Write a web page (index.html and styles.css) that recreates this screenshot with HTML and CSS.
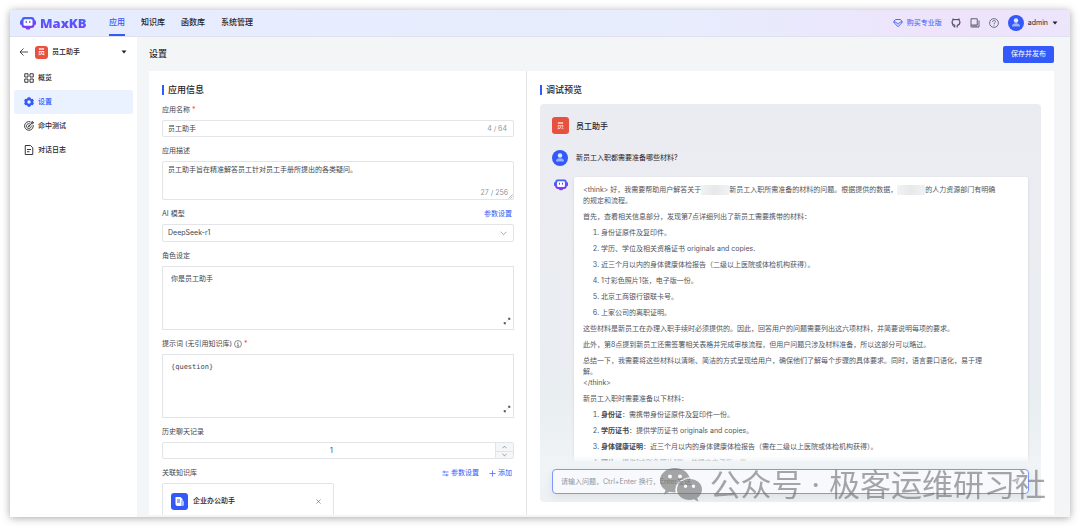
FILE: index.html
```
<!DOCTYPE html>
<html lang="zh-CN">
<head>
    <meta charset="UTF-8">
    <meta name="viewport" content="width=device-width, initial-scale=1.0">
    <title>MaxKB</title>
    <link rel="stylesheet" href="styles.css">
</head>
<body>
    <!-- Shared icons -->
    <svg class="sprite" aria-hidden="true">
        <defs>
            <linearGradient id="brand" x1="0" y1="0" x2="0.3" y2="1">
                <stop offset="0" stop-color="#3370ff"/>
                <stop offset="1" stop-color="#7f3bf5"/>
            </linearGradient>
        </defs>
        <symbol id="icon-bot" viewBox="0 0 32 26">
            <rect x="0" y="6" width="32" height="10" rx="3" fill="url(#brand)"/>
            <rect x="3" y="0" width="26" height="22" rx="6" fill="url(#brand)"/>
            <path d="M10 21h12l-3 4h-6z" fill="#7f3bf5"/>
            <rect x="7" y="4.500" width="18" height="13" rx="3" fill="#fff"/>
            <path d="M12.500 8.500v2.500M19.500 8.500v2.500" stroke="#5b4dfa" stroke-width="2.400" stroke-linecap="round"/>
        </symbol>
        <symbol id="icon-user" viewBox="0 0 32 32">
            <circle cx="16" cy="16" r="16" fill="#3459fb"/>
            <circle cx="16" cy="11" r="4.500" fill="#dfe6ff"/>
            <path d="M8 23c0-5 3-6.500 8-6.500s8 1.500 8 6.500z" fill="#9db2ff"/>
        </symbol>
        <symbol id="icon-expand" viewBox="0 0 16 16">
            <path d="M10 2h4v4zM2 10v4h4z" fill="#50555e" stroke="#50555e"/>
            <path d="M9.500 6.500l3-3M6.500 9.500l-3 3" stroke="#50555e" stroke-width="1.300"/>
        </symbol>
        <symbol id="icon-caret" viewBox="0 0 12 8">
            <path d="M1 1h10L6 7z" fill="#1f2329"/>
        </symbol>
    </svg>

    <div class="app">
        <header class="header">
            <a class="logo" href="#">
                <svg class="logo-icon" viewBox="0 0 32 26"><use href="#icon-bot"/></svg>
                <span class="logo-text">MaxKB</span>
            </a>
            <nav class="nav">
                <a class="active" href="#">应用</a>
                <a href="#">知识库</a>
                <a href="#">函数库</a>
                <a href="#">系统管理</a>
            </nav>
            <div class="header-right">
                <a class="buy" href="#">
                    <svg class="icon" viewBox="0 0 20 20" fill="none" stroke="#3459fb" stroke-width="1.800" stroke-linejoin="round"><path d="M5 3h10l4 5-9 9.500L1 8zM5.500 8l4.500 4.500L14.500 8M2 8h3.500M14.500 8H18"/></svg>
                    购买专业版
                </a>
                <a href="#" aria-label="GitHub"><svg class="icon" viewBox="0 0 20 20" fill="none" stroke="#50555e" stroke-width="2.400" stroke-linejoin="round"><path d="M7.500 19v-4.500C4 13.800 2.200 12 2.200 8.500c0-1.600.5-2.800 1.400-3.700L3.800 2l3 1.400c2.100-.5 4.300-.5 6.400 0l3-1.400.2 2.800c.9.900 1.400 2.100 1.400 3.700 0 3.500-1.800 5.300-5.300 6V19"/><path d="M7 16.800c-2.500.5-3-.8-4.500-2.300" stroke-width="1.600"/></svg></a>
                <a href="#" aria-label="文档"><svg class="icon" viewBox="0 0 20 20" fill="none" stroke="#50555e" stroke-width="1.800"><path d="M2 1.500h12.500V14H2zM2 14v4h16V5M5 16h10"/></svg></a>
                <a href="#" aria-label="帮助"><svg class="icon" viewBox="0 0 20 20" fill="none" stroke="#50555e" stroke-width="1.600"><circle cx="10" cy="10" r="8.800"/><path d="M7 8c0-4 6-4 6-.5 0 2-3 2-3 4.500M10 13.500v2"/></svg></a>
                <button class="account" type="button">
                    <svg class="avatar" viewBox="0 0 32 32"><use href="#icon-user"/></svg>
                    <span>admin</span>
                    <svg class="caret" viewBox="0 0 12 8"><use href="#icon-caret"/></svg>
                </button>
            </div>
        </header>

        <div class="body">
            <aside class="sidebar">
                <div class="app-switch">
                    <a class="back" href="#" aria-label="返回"><svg class="icon" viewBox="0 0 20 20" fill="none" stroke="#1f2329" stroke-width="1.600"><path d="M18 10H2M9 3l-7 7 7 7"/></svg></a>
                    <span class="app-badge small">员</span>
                    <span class="app-name">员工助手</span>
                    <svg class="caret" viewBox="0 0 12 8"><use href="#icon-caret"/></svg>
                </div>
                <nav class="menu">
                    <a href="#">
                        <svg class="icon" viewBox="0 0 20 20" fill="none" stroke="#1f2329" stroke-width="1.800"><path d="M1.500 1.500h6.500v6.500H1.500zM12 1.500h6.500v6.500H12zM1.500 12h6.500v6.500H1.500zM12 12h6.500v6.500H12z"/></svg>
                        概览
                    </a>
                    <a class="active" href="#">
                        <svg class="icon" viewBox="0 0 20 20"><path fill="#3459fb" fill-rule="evenodd" d="M7.500.5h5l1 2.500 1.500.8 2.500-.4 2.300 4.200L18 10l1.800 2.400-2.300 4.200-2.500-.4-1.500.8-1 2.500h-5l-1-2.500-1.500-.8-2.500.4L.2 12.400 2 10 .2 7.600l2.300-4.200 2.500.4L6.500 3zM10 6.500a3.500 3.500 0 1 0 0 7 3.500 3.500 0 0 0 0-7z"/></svg>
                        设置
                    </a>
                    <a href="#">
                        <svg class="icon" viewBox="0 0 20 20" fill="none" stroke="#1f2329" stroke-width="1.700"><path d="M13 1.800A8.700 8.700 0 1 0 18.300 8M11.500 5.700A4.800 4.800 0 1 0 14.300 9M9.500 10.500l5-5V2.500L17 .8v2.400h2.500L17.500 5.500h-3"/><circle cx="9.500" cy="10.500" r="1"/></svg>
                        命中测试
                    </a>
                    <a href="#">
                        <svg class="icon" viewBox="0 0 20 20" fill="none" stroke="#1f2329" stroke-width="1.800"><path d="M2.500 1h10.500l4.500 4.500V19h-15zM6 9h8M6 13.500h5"/></svg>
                        对话日志
                    </a>
                </nav>
            </aside>

            <main class="main">
                <div class="page-head">
                    <h1>设置</h1>
                    <button class="publish" type="button">保存并发布</button>
                </div>

                <div class="panel">
                    <form class="settings">
                        <h2 class="section-title">应用信息</h2>

                        <div class="label-row first">
                            <label for="name">应用名称 <span class="required">*</span></label>
                        </div>
                        <div class="field">
                            <input type="text" id="name" value="员工助手">
                            <span class="count">4 / 64</span>
                        </div>

                        <div class="label-row">
                            <label for="desc">应用描述</label>
                        </div>
                        <div class="area desc">
                            <textarea id="desc">员工助手旨在精准解答员工针对员工手册所提出的各类疑问。</textarea>
                            <span class="count">27 / 256</span>
                            <svg class="grip" viewBox="0 0 10 10" stroke="#646a73"><path d="M1 9l8-8M5 9l4-4"/></svg>
                        </div>

                        <div class="label-row">
                            <label for="model">AI 模型</label>
                            <a class="link" href="#">参数设置</a>
                        </div>
                        <div class="field select">
                            <select id="model">
                                <option>DeepSeek-r1</option>
                            </select>
                            <svg class="chevron" viewBox="0 0 12 8" fill="none" stroke="#8f959e" stroke-width="1.400"><path d="M1 1l5 5 5-5"/></svg>
                        </div>

                        <div class="label-row">
                            <label for="role">角色设定</label>
                        </div>
                        <div class="area editor">
                            <textarea id="role">你是员工助手</textarea>
                            <svg class="expand" viewBox="0 0 16 16"><use href="#icon-expand"/></svg>
                        </div>

                        <div class="label-row">
                            <label for="prompt">提示词 (无引用知识库)
                                <svg class="info" viewBox="0 0 16 16" fill="none" stroke="#40454d" stroke-width="1.200"><circle cx="8" cy="8" r="7"/><path d="M8 3.500v2M6.500 7H8v5M6 12h4"/></svg>
                                <span class="required">*</span></label>
                        </div>
                        <div class="area editor">
                            <textarea id="prompt">{question}</textarea>
                            <svg class="expand" viewBox="0 0 16 16"><use href="#icon-expand"/></svg>
                        </div>

                        <div class="label-row">
                            <label for="history">历史聊天记录</label>
                        </div>
                        <div class="field number">
                            <input type="number" id="history" value="1">
                            <div class="steps">
                                <button type="button" aria-label="增加"><svg viewBox="0 0 12 8" fill="none" stroke="#646a73" stroke-width="1.500"><path d="M1 7l5-5 5 5"/></svg></button>
                                <button type="button" aria-label="减少"><svg viewBox="0 0 12 8" fill="none" stroke="#646a73" stroke-width="1.500"><path d="M1 1l5 5 5-5"/></svg></button>
                            </div>
                        </div>

                        <div class="label-row">
                            <span>关联知识库</span>
                            <div class="links">
                                <a class="link" href="#"><svg viewBox="0 0 16 16" fill="none" stroke="#3459fb" stroke-width="1.600"><path d="M1 4.500h14M5 1.500v6M1 11.500h14M11 8.500v6"/></svg>参数设置</a>
                                <a class="link" href="#"><svg viewBox="0 0 16 16" fill="none" stroke="#3459fb" stroke-width="1.600"><path d="M1 8h14M8 1v14"/></svg>添加</a>
                            </div>
                        </div>
                        <div class="knowledge">
                            <svg class="knowledge-icon" viewBox="0 0 34 34"><rect width="34" height="34" rx="6" fill="#3459fb"/><path d="M9 8h10l4 4v14H13a4 4 0 0 1-4-4z" fill="#fff"/><path d="M20 15h3a3 3 0 0 1 3 3v5a3 3 0 0 1-3 3h-3z" fill="#aebeff"/><path d="M12 14h6M12 18h6" stroke="#3459fb" stroke-width="2"/></svg>
                            <span>企业办公助手</span>
                            <button type="button" aria-label="移除"><svg viewBox="0 0 12 12" stroke="#50555e" stroke-width="1.400"><path d="M1 1l10 10M11 1L1 11"/></svg></button>
                        </div>
                    </form>

                    <section class="preview">
                        <h2 class="section-title">调试预览</h2>
                        <div class="chat">
                            <div class="chat-head">
                                <span class="app-badge">员</span>
                                <strong>员工助手</strong>
                            </div>
                            <div class="question">
                                <svg class="avatar" viewBox="0 0 32 32"><use href="#icon-user"/></svg>
                                <span>新员工入职都需要准备哪些材料?</span>
                            </div>
                            <div class="answer">
                                <svg class="bot" viewBox="0 0 32 26"><use href="#icon-bot"/></svg>
                                <div class="bubble">
                                    <p>&lt;think&gt; 好，我需要帮助用户解答关于<span class="mask"></span>新员工入职所需准备的材料的问题。根据提供的数据，<span class="mask"></span>的人力资源部门有明确<br>的规定和流程。</p>
                                    <p>首先，查看相关信息部分，发现第7点详细列出了新员工需要携带的材料：</p>
                                    <ol>
                                        <li>身份证原件及复印件。</li>
                                        <li>学历、学位及相关资格证书 originals and copies.</li>
                                        <li>近三个月以内的身体健康体检报告（二级以上医院或体检机构获得）。</li>
                                        <li>1寸彩色照片1张，电子版一份。</li>
                                        <li>北京工商银行银联卡号。</li>
                                        <li>上家公司的离职证明。</li>
                                    </ol>
                                    <p>这些材料是新员工在办理入职手续时必须提供的。因此，回答用户的问题需要列出这六项材料，并简要说明每项的要求。</p>
                                    <p>此外，第8点提到新员工还需签署相关表格并完成审核流程，但用户问题只涉及材料准备，所以这部分可以略过。</p>
                                    <p>总结一下，我需要将这些材料以清晰、简洁的方式呈现给用户，确保他们了解每个步骤的具体要求。同时，语言要口语化，易于理<br>解。<br>&lt;/think&gt;</p>
                                    <p>新员工入职时需要准备以下材料：</p>
                                    <ol>
                                        <li><b>身份证</b>：需携带身份证原件及复印件一份。</li>
                                        <li><b>学历证书</b>：提供学历证书 originals and copies。</li>
                                        <li><b>身体健康证明</b>：近三个月以内的身体健康体检报告（需在二级以上医院或体检机构获得）。</li>
                                        <li><b>照片</b>：提供1寸彩色照片1张，并提交电子版一份。</li>
                                    </ol>
                                </div>
                            </div>
                            <div class="composer">
                                <div class="composer-box">
                                    <input type="text" aria-label="问题" placeholder="请输入问题，Ctrl+Enter 换行，Enter发送">
                                    <button type="button" aria-label="发送"><svg viewBox="0 0 20 20" fill="#b4b8c0"><path d="M1 8L19 1l-5 17-4-6 4-6-6 5z"/></svg></button>
                                </div>
                            </div>
                        </div>
                    </section>
                </div>
            </main>
        </div>
    </div>

    <div class="watermark">
        <svg viewBox="0 0 42 34" fill="#6c6c6c">
            <path fill-rule="evenodd" d="M15 0C6.500 0 0 5.500 0 12.500c0 4 2 7.300 5.500 9.500L4 26.500l5.500-2.800c2 .6 4 .8 6 .8C14 16 21 9.500 29.500 9.500 28 4 22 0 15 0zM10 6.500a2 2 0 1 1 0 4 2 2 0 0 1 0-4zm10 0a2 2 0 1 1 0 4 2 2 0 0 1 0-4z"/>
            <path fill-rule="evenodd" d="M29.500 11C22.500 11 17 15.500 17 21.500S22.500 32 29.500 32c1.500 0 3-.2 4.500-.7l4.500 2.500-1.300-3.800c3-2 4.800-5 4.800-8.500C42 15.500 36.500 11 29.500 11zM25.500 16.500a1.700 1.700 0 1 1 0 3.400 1.700 1.700 0 0 1 0-3.400zm8 0a1.700 1.700 0 1 1 0 3.400 1.700 1.700 0 0 1 0-3.400z"/>
        </svg>
        <span>公众号 · 极客运维研习社</span>
    </div>
</body>
</html>
```
FILE: styles.css
```
/* Color Scheme */
:root {
    --primary: #3459fb;
    --text: #1f2329;
    --text-regular: #40454d;
    --text-muted: #8f959e;
    --border: #e2e4e8;
    --page: #f3f5f7;
    --danger: #e85140;
}

* {
    box-sizing: border-box;
}

body {
    margin: 0;
    padding: 10px 10px 11px;
    height: 100vh;
    overflow: hidden;
    background: #fff;
    color: var(--text);
    font-family: Inter, "Noto Sans CJK SC", sans-serif;
    font-size: 7px;
    line-height: 12px;
}

a {
    color: inherit;
    text-decoration: none;
}

button,
input,
textarea,
select {
    margin: 0;
    padding: 0;
    border: 0;
    background: none;
    color: inherit;
    font: inherit;
    outline: none;
}

button {
    cursor: pointer;
}

svg {
    display: block;
    flex: none;
}

h1,
h2 {
    margin: 0;
    font-size: 9px;
    font-weight: 500;
}

.sprite {
    position: absolute;
    width: 0;
    height: 0;
}

.icon {
    width: 10px;
    height: 10px;
}

.caret {
    width: 6px;
    height: 4px;
}

.avatar {
    width: 16px;
    height: 16px;
}

/* Layout */
.app {
    display: flex;
    flex-direction: column;
    height: 100%;
    background: var(--page);
    box-shadow: 0 1px 8px rgba(0, 0, 0, 0.35);
}

.body {
    display: flex;
    flex: 1;
    min-height: 0;
}

/* Header */
.header {
    display: flex;
    align-items: center;
    height: 27px;
    padding: 0 12px 0 10px;
    background: linear-gradient(90deg, #e6ecff 0%, #e8ecfd 65%, #eee3fb 90%, #ece6fb 100%);
    border-bottom: 1px solid #dfe1ee;
}

.logo {
    display: flex;
    align-items: center;
    gap: 4px;
    width: 89px;
}

.logo-icon {
    width: 16px;
    height: 13px;
}

.logo-text {
    font-family: "Noto Sans", sans-serif;
    font-size: 13px;
    font-weight: 900;
    line-height: 16px;
    color: transparent;
    background: linear-gradient(180deg, #3370ff 10%, #7f3bf5 90%);
    -webkit-background-clip: text;
    background-clip: text;
}

.nav {
    display: flex;
    align-self: stretch;
    gap: 16px;
    font-size: 8px;
    font-weight: 500;
}

.nav a {
    padding-top: 6px;
}

.nav .active {
    color: var(--primary);
    border-bottom: 2px solid var(--primary);
}

.header-right {
    display: flex;
    align-items: center;
    gap: 9px;
    margin-left: auto;
}

.buy,
.account {
    display: flex;
    align-items: center;
    gap: 4px;
}

.buy {
    color: var(--primary);
}

/* Sidebar */
.sidebar {
    width: 127px;
    flex: none;
    padding: 8px 4px;
    background: #fff;
}

.app-switch {
    display: flex;
    align-items: center;
    gap: 4px;
    height: 14px;
    margin-bottom: 7px;
    padding: 0 6px 0 5px;
    font-weight: 500;
}

.app-switch .caret {
    margin-left: auto;
}

.app-badge {
    display: flex;
    align-items: center;
    justify-content: center;
    width: 17px;
    height: 17px;
    border-radius: 3px;
    background: var(--danger);
    color: #fff;
}

.app-badge.small {
    width: 13px;
    height: 13px;
    margin-left: 2px;
}

.menu a {
    display: flex;
    align-items: center;
    gap: 4px;
    height: 24px;
    padding-left: 10px;
    border-radius: 2px;
    font-weight: 500;
}

.menu .active {
    background: #ebf2ff;
    color: var(--primary);
}

/* Page */
.main {
    display: flex;
    flex: 1;
    flex-direction: column;
    min-width: 0;
    padding: 0 16px 2px 12px;
}

.page-head {
    display: flex;
    align-items: center;
    justify-content: space-between;
    height: 34px;
}

.publish {
    height: 17px;
    padding: 0 8px;
    border-radius: 2px;
    background: var(--primary);
    color: #fff;
}

.panel {
    display: grid;
    grid-template-columns: 377px 1fr;
    flex: 1;
    min-height: 0;
    background: #fff;
}

.section-title {
    padding-left: 4px;
    border-left: 2px solid var(--primary);
    line-height: 10px;
}

/* Settings form */
.settings {
    min-height: 0;
    overflow: hidden;
    padding: 14px 12px 0 13px;
    color: var(--text-regular);
}

.settings .section-title,
.knowledge {
    color: var(--text);
}

.label-row {
    display: flex;
    justify-content: space-between;
    padding: 8px 0 4px;
}

.label-row.first {
    padding-top: 9px;
}

.label-row label {
    display: flex;
    gap: 2px;
}

.label-row .info {
    width: 8px;
    height: 8px;
    margin-top: 2px;
}

.required {
    color: #f54a45;
}

.link {
    display: flex;
    align-items: center;
    gap: 2px;
    padding-right: 2px;
    color: var(--primary);
}

.link svg {
    width: 7px;
    height: 7px;
}

.links {
    display: flex;
    gap: 8px;
}

.field {
    position: relative;
    display: flex;
    align-items: center;
    height: 17px;
    border: 1px solid var(--border);
    border-radius: 2px;
}

.field.select {
    height: 18px;
}

.field input,
.field select {
    flex: 1;
    min-width: 0;
    padding-left: 5px;
    appearance: none;
}

.count {
    padding-right: 6px;
    color: var(--text-muted);
}

.chevron {
    position: absolute;
    right: 6px;
    width: 7px;
    height: 5px;
    pointer-events: none;
}

.area {
    position: relative;
    height: 64px;
    border: 1px solid var(--border);
}

.area textarea {
    display: block;
    width: 100%;
    height: 100%;
    padding: 6px 8px;
    resize: none;
}

.area.desc {
    height: 39px;
    border-radius: 2px;
}

.area.desc textarea {
    padding: 2px 5px;
}

.area .count {
    position: absolute;
    right: 0;
    bottom: 0;
    padding-right: 5px;
}

.grip {
    position: absolute;
    right: 0;
    bottom: 0;
    width: 5px;
    height: 5px;
}

.expand {
    position: absolute;
    right: 2px;
    bottom: 4px;
    width: 8px;
    height: 8px;
}

.editor textarea {
    font-family: "DejaVu Sans Mono", "Noto Sans CJK SC", monospace;
}

.number input {
    text-align: center;
    appearance: textfield;
}

.number input::-webkit-inner-spin-button {
    display: none;
}

.steps {
    display: grid;
    grid-template-rows: 1fr 1fr;
    align-self: stretch;
    width: 18px;
    border-left: 1px solid var(--border);
    background: #f5f6f8;
}

.steps button {
    display: flex;
    align-items: center;
    justify-content: center;
    min-height: 0;
}

.steps button + button {
    border-top: 1px solid var(--border);
}

.steps svg {
    width: 5px;
    height: 4px;
}

.knowledge {
    display: flex;
    align-items: center;
    gap: 5px;
    width: 49%;
    height: 36px;
    padding: 0 12px 0 8px;
    border: 1px solid var(--border);
    border-radius: 2px;
    font-weight: 500;
}

.knowledge-icon {
    width: 17px;
    height: 17px;
}

.knowledge button {
    margin-left: auto;
}

.knowledge button svg {
    width: 5px;
    height: 5px;
}

/* Preview */
.preview {
    display: flex;
    flex-direction: column;
    min-height: 0;
    padding: 14px 13px 13px;
    border-left: 1px solid var(--border);
}

.chat {
    display: flex;
    flex: 1;
    flex-direction: column;
    min-height: 0;
    margin-top: 9px;
    padding: 13px 12px 8px;
    border-radius: 4px;
    background: linear-gradient(180deg, #ebecf1 0%, #ebedf1 40%, #e9eef1 75%, #f0f4f7 92%, #edf1f4 100%);
}

.chat-head {
    display: flex;
    align-items: center;
    gap: 7px;
    margin-bottom: 16px;
}

.chat-head strong {
    font-size: 8px;
    font-weight: 500;
}

.question {
    display: flex;
    align-items: center;
    gap: 8px;
    margin-bottom: 10px;
}

.answer {
    display: flex;
    align-items: flex-start;
    flex: 1;
    gap: 6px;
    min-height: 0;
    overflow: hidden;
    margin: 0 -12px;
    padding: 1px 13px 0 14px;
}

.bot {
    width: 14px;
    height: 12px;
    margin-top: 2px;
}

.bubble {
    flex: 1;
    padding: 7px 9px;
    border-radius: 2px;
    background: #fff;
    box-shadow: 0 1px 3px rgba(31, 35, 41, 0.12);
    color: #50555e;
    line-height: 11px;
}

.bubble p {
    margin: 0 0 5px;
}

.bubble ol {
    margin: 0;
    padding-left: 18px;
}

.bubble li {
    margin-bottom: 5px;
}

.bubble b {
    color: var(--text-regular);
    font-weight: 700;
}

.mask {
    display: inline-block;
    width: 28px;
    height: 10px;
    background: linear-gradient(90deg, #f1f2f3, #e6e8ea, #f1f2f3);
    vertical-align: middle;
}

/* Message box, with a short fade over the end of the answer */
.composer {
    position: relative;
    padding-top: 8px;
}

.composer::before {
    content: "";
    position: absolute;
    left: -12px;
    right: -12px;
    top: -6px;
    height: 8px;
    background: linear-gradient(180deg, rgba(240, 244, 247, 0), #f0f4f7);
}

.composer-box {
    position: relative;
    display: flex;
    align-items: center;
    height: 25px;
    padding: 0 8px;
    border: 1px solid #7e98f9;
    border-radius: 4px;
    background: #f8f9fc;
    box-shadow: 0 3px 8px rgba(31, 35, 41, 0.08);
}

.composer-box input {
    flex: 1;
}

.composer-box input::placeholder {
    color: var(--text-muted);
}

.composer-box svg {
    width: 9px;
    height: 9px;
}

/* Watermark */
.watermark {
    position: absolute;
    right: 34px;
    bottom: 21px;
    display: flex;
    align-items: center;
    gap: 8px;
    opacity: 0.6;
    color: #6c6c6c;
    font-size: 31px;
    line-height: 44px;
    pointer-events: none;
}

.watermark svg {
    width: 42px;
    height: 34px;
}
```
